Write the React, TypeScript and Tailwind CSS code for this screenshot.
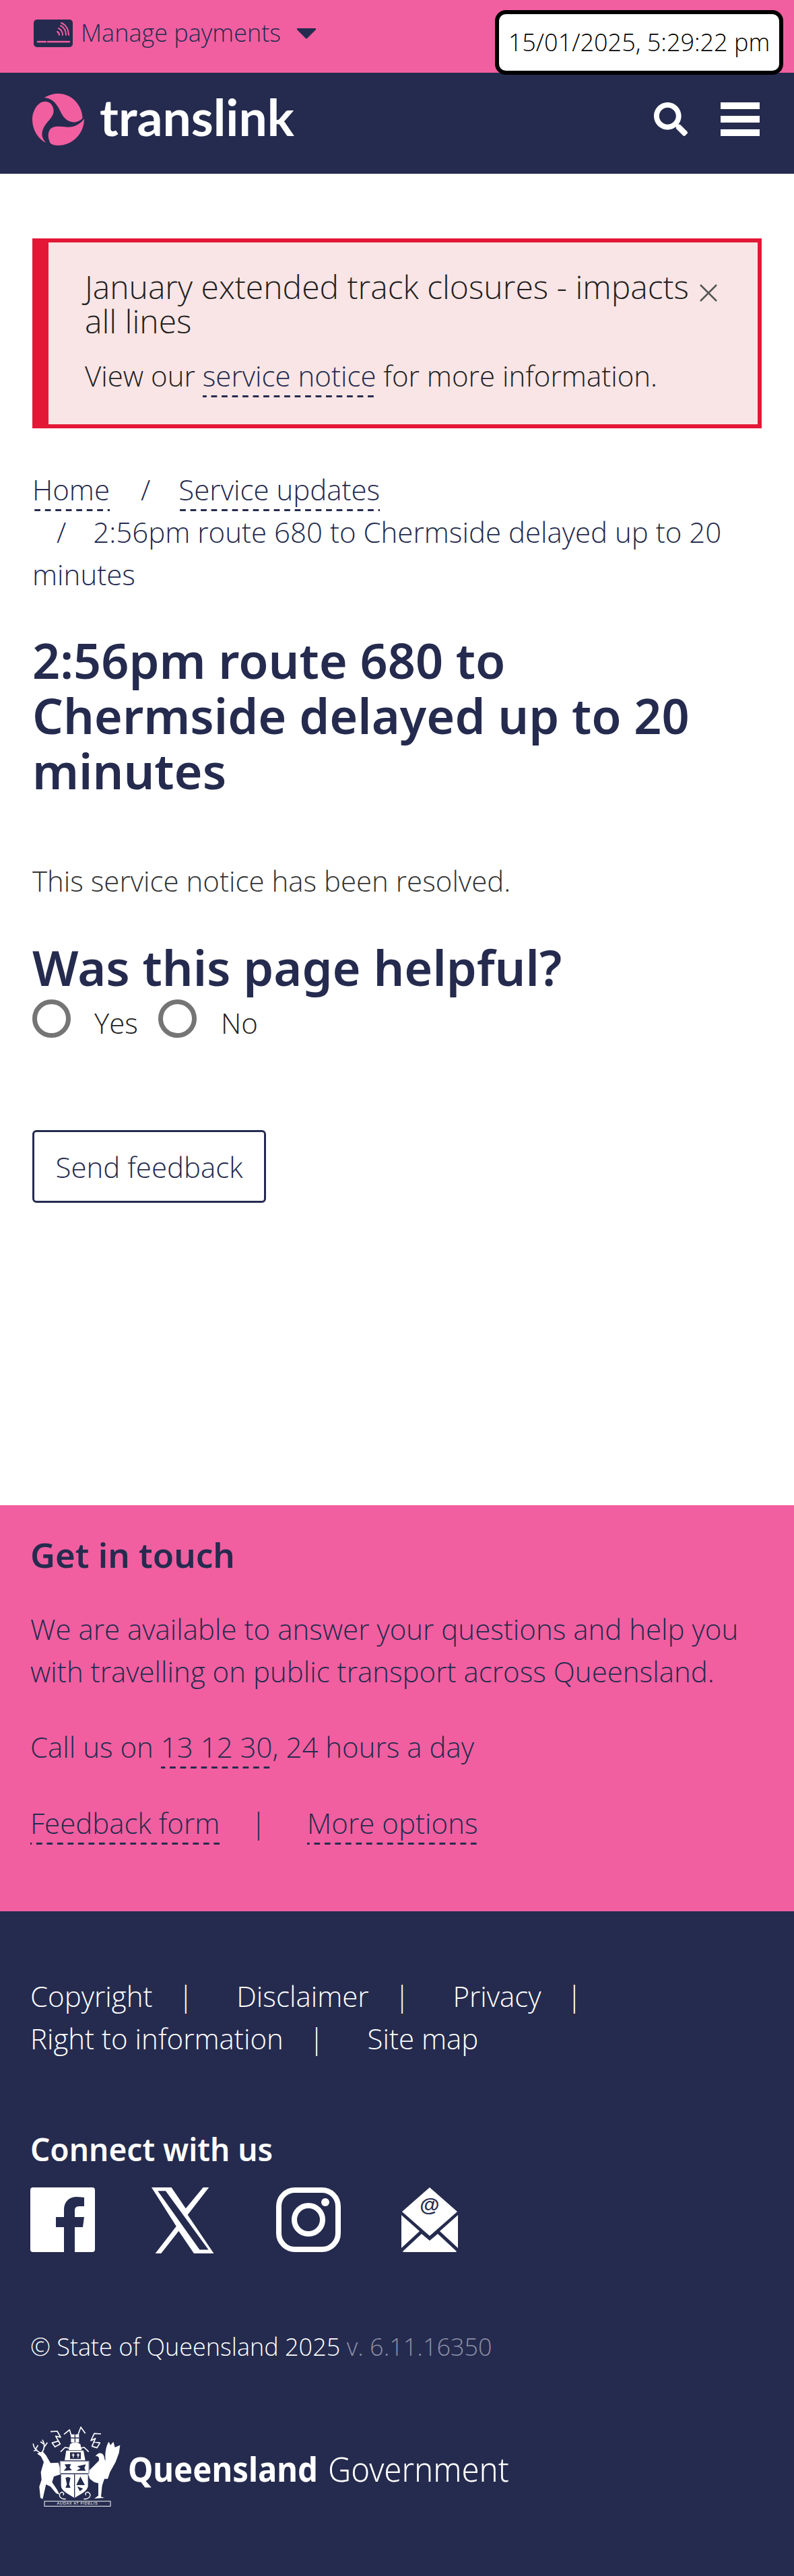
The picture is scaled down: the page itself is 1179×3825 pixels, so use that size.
import React from 'react';
import { FaSearch } from 'react-icons/fa';

const dashed =
  'pb-[4px] bg-[linear-gradient(to_right,#252b4e_9px,transparent_9px)] bg-[length:15.5px_3px] bg-bottom bg-repeat-x';

function TranslinkMark() {
  return (
    <svg viewBox="25 20 230 230" className="w-[77px] h-[77px] shrink-0">
      <g fill="#f15fa0">
        <path d="M78 38 C100 25 120 20 140 20 C200 20 245 70 248 128 C230 150 195 155 170 130 C150 110 148 85 125 60 C110 45 95 40 78 38 Z" />
        <path d="M82 55 C50 55 25 95 25 135 C25 180 50 220 85 238 C65 215 60 190 85 155 C105 130 125 115 118 85 C112 65 100 55 82 55 Z" />
        <path d="M255 132 C255 200 200 250 140 250 C125 250 112 246 105 240 C92 215 92 185 110 172 C125 163 150 165 175 168 C205 172 235 158 255 132 Z" />
      </g>
    </svg>
  );
}

function CardIcon() {
  return (
    <svg viewBox="0 0 58 41" className="w-[58px] h-[41px] shrink-0">
      <rect width="58" height="41" rx="5" fill="#252b4e" />
      <path d="M6 33h12M21 33h32" stroke="#f15fa0" strokeWidth="2.5" strokeLinecap="round" />
      <g fill="none" stroke="#f15fa0" strokeWidth="2" strokeLinecap="round">
        <path d="M35 18c2 1 3 3 3 5" />
        <path d="M37 13c4 2 6 6 6 10" />
        <path d="M40 9c5 2 8 8 8 14" />
        <path d="M41 5c7 3 11 10 11 18" />
      </g>
    </svg>
  );
}

function FacebookIcon() {
  return (
    <svg viewBox="0 0 96 96" className="w-[96px] h-[96px]">
      <path
        fill="#fff"
        fillRule="evenodd"
        d="M4 0h88a4 4 0 0 1 4 4v88a4 4 0 0 1-4 4H66V59h12l2-15H66v-9c0-4 1-7 7-7h7V15c-2 0-6-1-11-1-11 0-19 7-19 19v11H38v15h12v37H4a4 4 0 0 1-4-4V4a4 4 0 0 1 4-4z"
      />
    </svg>
  );
}

function XIcon() {
  return (
    <svg viewBox="1.25 2.25 21.5 19.5" preserveAspectRatio="none" className="w-[97px] h-[98px]">
      <path
        fill="#fff"
        d="M18.244 2.25h1.9l-7.0 8.1 8.6 11.4H15.2l-5.0-6.6-5.8 6.6H2.5l6.9-8.0L1.254 2.25H7.8l4.713 6.231zm-1.161 18.4h2.9L5.9 3.3H3.3z"
      />
    </svg>
  );
}

function InstagramIcon() {
  return (
    <svg viewBox="0 0 96 96" className="w-[96px] h-[96px]">
      <rect x="4" y="4" width="88" height="88" rx="24" fill="none" stroke="#fff" strokeWidth="8" />
      <circle cx="48" cy="48" r="21" fill="none" stroke="#fff" strokeWidth="8" />
      <circle cx="73" cy="22" r="6" fill="#fff" />
    </svg>
  );
}

function MailIcon() {
  return (
    <svg viewBox="0 0 84 96" className="w-[84px] h-[96px]">
      <path fill="#fff" d="M42 0 L83 36 L42 72 L1 36 Z" />
      <path fill="#fff" d="M0 41 L27 65 L0 90 Z M84 41 L57 65 L84 90 Z" />
      <path fill="#fff" d="M30 69 L42 79 L54 69 L82 95 Q82 96 80 96 H4 Q2 96 2 95 Z" />
      <text x="42" y="36" textAnchor="middle" fontSize="30" fontWeight="700" fill="#252b4e" fontFamily="Liberation Sans, sans-serif">@</text>
    </svg>
  );
}

// simplified coat of arms, stag and brolga either side of the shield
function Crest() {
  return (
    <svg viewBox="0 0 450 405" className="w-[150px] h-[135px] shrink-0">
      {/* stag */}
      <path
        fill="#fff"
        d="M45 148 L70 138 L85 155 L105 190 L140 188 L148 215 L150 240 L120 250 L112 275 L135 310 L145 330 L130 325 L105 295 L85 285 L70 350 L60 345 L55 295 L65 265 L62 230 L75 185 L62 160 Z"
      />
      <g fill="none" stroke="#fff" strokeWidth="5" strokeLinecap="round">
        <path d="M62 146 C42 136 30 125 28 105 M45 132 L32 135 M40 126 L48 112" />
        <path d="M68 142 C80 122 80 105 70 88 M76 120 L90 100 M76 106 L62 96" />
      </g>
      {/* brolga */}
      <path
        fill="#fff"
        d="M305 160 C320 135 345 145 345 170 L350 180 C345 130 360 100 365 95 L372 110 L385 95 L392 120 L415 110 L410 145 L395 185 L370 230 L360 260 L345 260 L335 290 L330 340 L345 345 L300 348 L318 335 L318 280 L300 275 L280 260 L270 230 L300 200 L320 180 C325 165 315 155 305 160 Z"
      />
      {/* mantling */}
      <g fill="none" stroke="#fff" strokeWidth="5" strokeLinejoin="round">
        <path d="M105 50 L135 48 L150 75 L128 70 L148 105 L125 118 L112 100 L140 92" />
        <path d="M330 60 L300 58 L285 90 L305 80 L290 115 L312 122 L325 100 L295 95" />
        <path d="M150 140 L170 120 L195 125 M275 140 L255 120 L232 125" />
        <path d="M165 62 L190 42 L198 70 M260 58 L240 30 L226 68" />
      </g>
      {/* crown and helmet */}
      <path fill="#fff" d="M196 62 H232 V98 H196 Z" />
      <path fill="none" stroke="#252b4e" strokeWidth="4" d="M214 60 V98 M196 78 H232" />
      <path fill="#fff" d="M192 106 C205 96 225 96 238 106 L244 132 H186 Z" />
      <path fill="#fff" d="M175 134 H252 L260 178 H168 Z" />
      <path fill="#252b4e" d="M192 142 H240 V172 H192 Z" />
      <path fill="#fff" d="M200 152 h4 v-5 h4 v5 h4 v4 h-4 v10 h-4 v-10 h-4 z M222 152 h4 v-5 h4 v5 h4 v4 h-4 v10 h-4 v-10 h-4 z" />
      {/* shield */}
      <path fill="#fff" d="M148 182 H276 V236 H148 Z" />
      <path fill="none" stroke="#8a8fa8" strokeWidth="4" d="M148 182 H276 V236 H148 Z" />
      <path fill="#252b4e" d="M168 196 L196 194 L190 210 L200 222 L164 224 L176 210 Z M224 204 L262 196 L256 212 L262 224 L220 224 L238 214 Z" />
      <path fill="#fff" d="M152 240 H272 V290 C272 315 235 330 212 345 C190 330 152 315 152 290 Z" />
      <path stroke="#252b4e" strokeWidth="4" d="M212 240 V344" />
      <path fill="#252b4e" d="M172 256 L182 252 L194 256 L188 284 L194 300 H172 L178 284 Z M238 250 L258 288 H220 Z M224 294 L250 304 L236 316 Z" />
      {/* scroll and motto */}
      <g fill="none" stroke="#fff" strokeWidth="4" strokeLinecap="round">
        <path d="M172 350 C150 352 138 335 150 322 C158 316 168 324 162 332" />
        <path d="M254 350 C276 352 290 335 276 322 C268 316 256 324 262 332" />
      </g>
      <rect x="78" y="360" width="294" height="22" fill="#252b4e" stroke="#fff" strokeWidth="3" />
      <text x="225" y="376" textAnchor="middle" fontSize="17" letterSpacing="2" fill="#fff" fontFamily="Liberation Sans, sans-serif">AUDAX AT FIDELIS</text>
    </svg>
  );
}

export default function App() {
  const sep = 'ml-[38px] mr-[64px]';
  return (
    <div className="relative min-h-[3825px] bg-white font-['Open_Sans',sans-serif] font-light text-[#252b4e]">
      {/* top bar */}
      <div className="h-[108px] bg-[#f15fa0] pl-[50px] pt-[29px]">
        <div className="flex items-start">
          <CardIcon />
          <span className="ml-[12px] text-[36px] leading-[40px]">Manage payments</span>
          <svg viewBox="0 0 28 16" className="ml-[24px] mt-[13px] w-[28px] h-[16px]">
            <path d="M1 0h26a1 1 0 0 1 1 2L15 15a1.5 1.5 0 0 1-2 0L0 2a1 1 0 0 1 1-2z" fill="#252b4e" />
          </svg>
        </div>
      </div>
      <div className="absolute left-[735px] top-[15px] flex h-[96px] w-[428px] items-center justify-center rounded-[16px] border-[6px] border-black bg-white text-[36px] text-black">
        15/01/2025, 5:29:22 pm
      </div>

      {/* nav */}
      <div className="flex h-[150px] items-center bg-[#252b4e] pb-[12px] pl-[48px] pr-[51px]">
        <TranslinkMark />
        <span className="-mt-[8px] ml-[23px] font-['Lato',sans-serif] text-[75px] font-bold leading-none text-white">translink</span>
        <FaSearch className="ml-auto h-[50px] w-[50px] text-white" />
        <div className="ml-[49px] flex w-[58px] flex-col gap-[10px]">
          <div className="h-[10px] bg-white" />
          <div className="h-[10px] bg-white" />
          <div className="h-[10px] bg-white" />
        </div>
      </div>

      <main className="h-[1977px] px-[48px] pt-[96px]">
        {/* alert */}
        <div className="relative h-[282px] w-[1083px] border-[6px] border-l-[24px] border-[#e31837] bg-[#f9e5e5] pl-[54px] pt-[40px] text-[#222]">
          <h2 className="w-[910px] text-[48px] leading-[51px]">January extended track closures - impacts all lines</h2>
          <p className="mt-[27px] text-[42px] leading-[58px]">
            View our <span className={`${dashed} text-[#252b4e]`}>service notice</span> for more information.
          </p>
          <span className="absolute left-[966px] top-[62px] text-[#666]">
            <svg viewBox="0 0 28 26" className="h-[26px] w-[28px]">
              <path d="M2 1l24 24M26 1L2 25" stroke="#555" strokeWidth="2.5" />
            </svg>
          </span>
        </div>

        {/* breadcrumb */}
        <nav className="mt-[59px] text-[42px] leading-[63px]">
          <span className={dashed}>Home</span>
          <span className="ml-[46px] mr-[42px]">/</span>
          <span className={dashed}>Service updates</span>
          <br />
          <span className="ml-[36px] mr-[40px]">/</span>
          <span>2:56pm route 680 to Chermside delayed up to 20 minutes</span>
        </nav>

        <h1 className="mt-[55px] font-['Noto_Sans',sans-serif] text-[72px] font-semibold leading-[82px]">
          2:56pm route 680 to Chermside delayed up to 20 minutes
        </h1>

        <p className="mt-[94px] text-[42px] leading-[58px] text-[#333]">This service notice has been resolved.</p>

        <h2 className="mt-[58px] font-['Noto_Sans',sans-serif] text-[72px] font-semibold leading-[82px]">Was this page helpful?</h2>

        <div className="mt-[7px] flex items-start text-[42px] text-[#222]">
          <span className="h-[57px] w-[57px] rounded-full border-[7px] border-[#757575]" />
          <span className="ml-[35px] mt-[6px] w-[95px] leading-[58px]">Yes</span>
          <span className="h-[57px] w-[57px] rounded-full border-[7px] border-[#757575]" />
          <span className="ml-[36px] mt-[6px] leading-[58px]">No</span>
        </div>

        <button className="mt-[130px] block h-[108px] w-[347px] rounded-[6px] border-[3px] border-[#252b4e] text-center text-[42px]">
          Send feedback
        </button>
      </main>

      {/* get in touch */}
      <section className="h-[603px] bg-[#f15fa0] px-[45px] pt-[42px]">
        <h3 className="font-['Noto_Sans',sans-serif] text-[51px] font-semibold leading-[62px]">Get in touch</h3>
        <p className="mt-[48px] text-[42px] leading-[63px]">
          We are available to answer your questions and help you with travelling on public transport across Queensland.
        </p>
        <p className="mt-[49px] text-[42px] leading-[63px]">
          Call us on <span className={dashed}>13 12 30</span>, 24 hours a day
        </p>
        <p className="mt-[50px] text-[42px] leading-[63px]">
          <span className={dashed}>Feedback form</span>
          <span className="ml-[46px] mr-[61px]">|</span>
          <span className={dashed}>More options</span>
        </p>
      </section>

      {/* footer */}
      <footer className="h-[987px] bg-[#252b4e] px-[45px] pt-[94px] text-white">
        <div className="text-[42px] leading-[63px]">
          <div>
            Copyright<span className={sep}>|</span>Disclaimer<span className={sep}>|</span>Privacy<span className="ml-[38px]">|</span>
          </div>
          <div>
            Right to information<span className={sep}>|</span>Site map
          </div>
        </div>
        <h3 className="mt-[103px] font-['Noto_Sans',sans-serif] text-[46px] font-semibold leading-[60px]">Connect with us</h3>
        <div className="mt-[27px] flex items-start">
          <FacebookIcon />
          <div className="ml-[84px]"><XIcon /></div>
          <div className="ml-[88px]"><InstagramIcon /></div>
          <div className="ml-[90px]"><MailIcon /></div>
        </div>
        <p className="mt-[114px] text-[36px] leading-[50px]">
          © State of Queensland 2025 <span className="text-[#8b8fa6]">v. 6.11.16350</span>
        </p>
        <div className="-ml-[5px] mt-[84px] flex items-center">
          <Crest />
          <span className="mt-[8px] origin-left scale-x-[0.945] font-['Noto_Sans',sans-serif] text-[50px] font-bold leading-none">Queensland</span>
          <span className="-ml-[1px] mt-[8px] origin-left scale-x-[0.945] font-['Noto_Sans',sans-serif] text-[50px] font-light leading-none">Government</span>
        </div>
      </footer>
    </div>
  );
}
